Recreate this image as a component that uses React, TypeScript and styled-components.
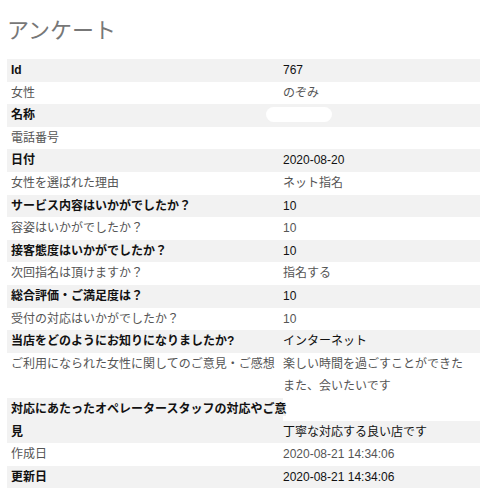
import React from "react";
import styled, { createGlobalStyle } from "styled-components";

const GlobalStyle = createGlobalStyle`
  html, body {
    margin: 0;
    padding: 0;
    background: #ffffff;
  }
  body {
    font-family: "Liberation Sans", "Noto Sans CJK JP", sans-serif;
    font-size: 12px;
  }
`;

const Page = styled.div`
  padding: 0 0 0 7px;
  width: 473px;
  overflow: hidden;
`;

const Title = styled.h1`
  margin: 13px 0 16px;
  font-family: "Noto Sans CJK JP", sans-serif;
  font-size: 22px;
  line-height: 30px;
  font-weight: 400;
  color: #777777;
`;

const Table = styled.div`
  display: flex;
  flex-direction: column;
`;

const Row = styled.div`
  display: grid;
  grid-template-columns: 276px 1fr;
  align-items: start;
`;

const Label = styled.div<{ $shade: boolean }>`
  align-self: stretch;
  padding: 0 0 0 4px;
  line-height: 22.6px;
  background: ${(p) => (p.$shade ? "#f2f2f2" : "#ffffff")};
  font-weight: ${(p) => (p.$shade ? 700 : 400)};
  color: ${(p) => (p.$shade ? "#111111" : "#555555")};
  white-space: nowrap;
`;

const WrapBox = styled.div`
  width: 280px;
  white-space: normal;
`;

const WrapText = styled.span`
  background: #f2f2f2;
`;

const Value = styled.div<{ $shade: boolean; $offset?: boolean }>`
  position: relative;
  align-self: stretch;
  min-height: 22.6px;
  line-height: 22.6px;
  margin-top: ${(p) => (p.$offset ? "22.6px" : "0")};
  background: ${(p) => (p.$shade ? "#f2f2f2" : "#ffffff")};
  color: ${(p) => (p.$shade ? "#111111" : "#555555")};
`;

const Redaction = styled.span`
  position: absolute;
  left: -17px;
  top: 3px;
  width: 66px;
  height: 15px;
  border-radius: 8px;
  background: #ffffff;
`;

type Item = {
  label: string;
  value?: string | string[];
  redacted?: boolean;
  wrapLabel?: boolean;
};

const items: Item[] = [
  { label: "Id", value: "767" },
  { label: "女性", value: "のぞみ" },
  { label: "名称", redacted: true },
  { label: "電話番号" },
  { label: "日付", value: "2020-08-20" },
  { label: "女性を選ばれた理由", value: "ネット指名" },
  { label: "サービス内容はいかがでしたか？", value: "10" },
  { label: "容姿はいかがでしたか？", value: "10" },
  { label: "接客態度はいかがでしたか？", value: "10" },
  { label: "次回指名は頂けますか？", value: "指名する" },
  { label: "総合評価・ご満足度は？", value: "10" },
  { label: "受付の対応はいかがでしたか？", value: "10" },
  { label: "当店をどのようにお知りになりましたか?", value: "インターネット" },
  {
    label: "ご利用になられた女性に関してのご意見・ご感想",
    value: ["楽しい時間を過ごすことができた", "また、会いたいです"],
  },
  {
    label: "対応にあたったオペレータースタッフの対応やご意見",
    value: "丁寧な対応する良い店です",
    wrapLabel: true,
  },
  { label: "作成日", value: "2020-08-21 14:34:06" },
  { label: "更新日", value: "2020-08-21 14:34:06" },
];

export default function App() {
  return (
    <>
      <GlobalStyle />
      <Page>
        <Title>アンケート</Title>
        <Table>
          {items.map((item, i) => {
            const shade = i % 2 === 0;
            return (
              <Row key={item.label}>
                <Label $shade={shade}>
                  {item.wrapLabel ? (
                    <WrapBox>
                      <WrapText>{item.label}</WrapText>
                    </WrapBox>
                  ) : (
                    item.label
                  )}
                </Label>
                <Value $shade={shade} $offset={item.wrapLabel}>
                  {Array.isArray(item.value)
                    ? item.value.map((line, j) => (
                        <React.Fragment key={j}>
                          {j > 0 && <br />}
                          {line}
                        </React.Fragment>
                      ))
                    : item.value}
                  {item.redacted && <Redaction />}
                </Value>
              </Row>
            );
          })}
        </Table>
      </Page>
    </>
  );
}
